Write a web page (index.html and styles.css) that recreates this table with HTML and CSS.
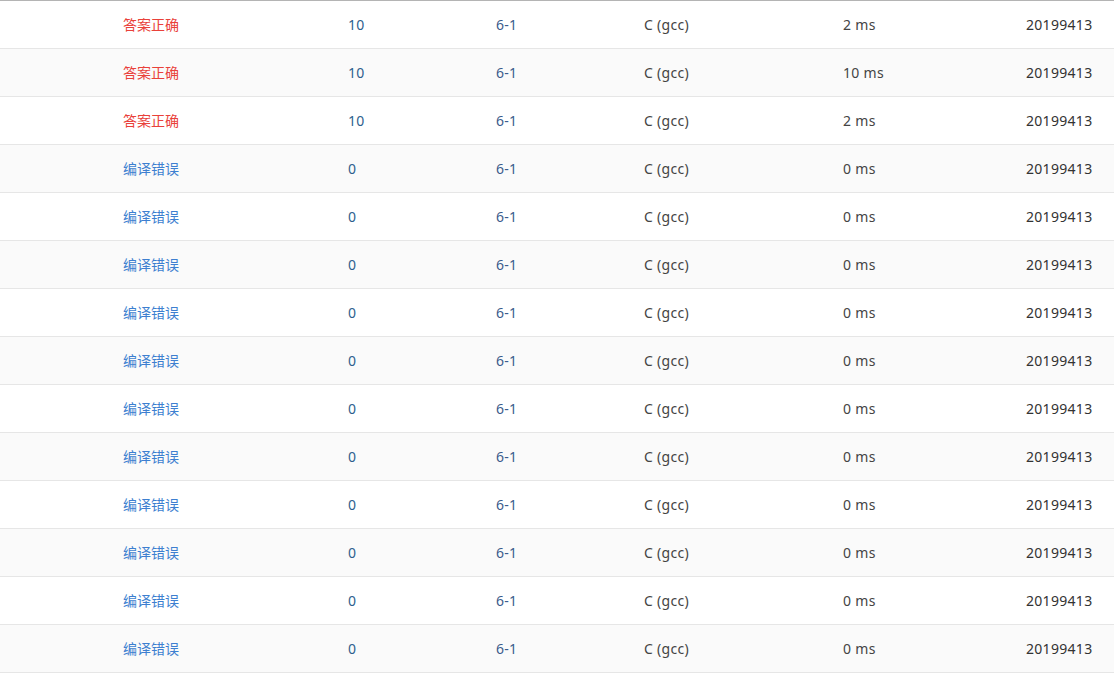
FILE: index.html
```html
<!DOCTYPE html>
<html lang="zh">
<head>
<meta charset="utf-8">
<link rel="stylesheet" href="styles.css">
</head>
<body>
<div class="table">
  <div class="row"><span class="c-status ok">答案正确</span><span class="c-score">10</span><span class="c-prob">6-1</span><span class="c-comp">C (gcc)</span><span class="c-time">2 ms</span><span class="c-user">20199413</span></div>
  <div class="row"><span class="c-status ok">答案正确</span><span class="c-score">10</span><span class="c-prob">6-1</span><span class="c-comp">C (gcc)</span><span class="c-time">10 ms</span><span class="c-user">20199413</span></div>
  <div class="row"><span class="c-status ok">答案正确</span><span class="c-score">10</span><span class="c-prob">6-1</span><span class="c-comp">C (gcc)</span><span class="c-time">2 ms</span><span class="c-user">20199413</span></div>
  <div class="row"><span class="c-status ce">编译错误</span><span class="c-score">0</span><span class="c-prob">6-1</span><span class="c-comp">C (gcc)</span><span class="c-time">0 ms</span><span class="c-user">20199413</span></div>
  <div class="row"><span class="c-status ce">编译错误</span><span class="c-score">0</span><span class="c-prob">6-1</span><span class="c-comp">C (gcc)</span><span class="c-time">0 ms</span><span class="c-user">20199413</span></div>
  <div class="row"><span class="c-status ce">编译错误</span><span class="c-score">0</span><span class="c-prob">6-1</span><span class="c-comp">C (gcc)</span><span class="c-time">0 ms</span><span class="c-user">20199413</span></div>
  <div class="row"><span class="c-status ce">编译错误</span><span class="c-score">0</span><span class="c-prob">6-1</span><span class="c-comp">C (gcc)</span><span class="c-time">0 ms</span><span class="c-user">20199413</span></div>
  <div class="row"><span class="c-status ce">编译错误</span><span class="c-score">0</span><span class="c-prob">6-1</span><span class="c-comp">C (gcc)</span><span class="c-time">0 ms</span><span class="c-user">20199413</span></div>
  <div class="row"><span class="c-status ce">编译错误</span><span class="c-score">0</span><span class="c-prob">6-1</span><span class="c-comp">C (gcc)</span><span class="c-time">0 ms</span><span class="c-user">20199413</span></div>
  <div class="row"><span class="c-status ce">编译错误</span><span class="c-score">0</span><span class="c-prob">6-1</span><span class="c-comp">C (gcc)</span><span class="c-time">0 ms</span><span class="c-user">20199413</span></div>
  <div class="row"><span class="c-status ce">编译错误</span><span class="c-score">0</span><span class="c-prob">6-1</span><span class="c-comp">C (gcc)</span><span class="c-time">0 ms</span><span class="c-user">20199413</span></div>
  <div class="row"><span class="c-status ce">编译错误</span><span class="c-score">0</span><span class="c-prob">6-1</span><span class="c-comp">C (gcc)</span><span class="c-time">0 ms</span><span class="c-user">20199413</span></div>
  <div class="row"><span class="c-status ce">编译错误</span><span class="c-score">0</span><span class="c-prob">6-1</span><span class="c-comp">C (gcc)</span><span class="c-time">0 ms</span><span class="c-user">20199413</span></div>
  <div class="row"><span class="c-status ce">编译错误</span><span class="c-score">0</span><span class="c-prob">6-1</span><span class="c-comp">C (gcc)</span><span class="c-time">0 ms</span><span class="c-user">20199413</span></div>
</div>
</body>
</html>
```

FILE: styles.css
```css
html, body {
  margin: 0;
  padding: 0;
  background: #fff;
}
body {
  font-family: "Noto Sans", "Noto Sans CJK SC", sans-serif;
  font-size: 14px;
  color: #333;
}
.table {
  border-top: 1px solid #b4b4b4;
}
.row {
  display: grid;
  grid-template-columns: 123px 225px 148px 148px 199px 183px 1fr;
  align-items: center;
  height: 47px;
  border-bottom: 1px solid #e6e6e6;
  background: #fff;
}
.row:nth-child(even) {
  background: #fafafa;
}
.row span {
  line-height: 20px;
  white-space: nowrap;
  letter-spacing: 0.3px;
}
.row .c-status {
  letter-spacing: 0;
}
.c-status { grid-column: 2; }
.c-score { grid-column: 3; color: #2e5f8e; }
.c-prob { grid-column: 4; color: #3b5c8c; }
.c-comp { grid-column: 5; color: #444; }
.c-time { grid-column: 6; color: #444; }
.c-user { grid-column: 7; color: #333; }
.ok { color: #e9413a; }
.ce { color: #3d7fd0; }
```
